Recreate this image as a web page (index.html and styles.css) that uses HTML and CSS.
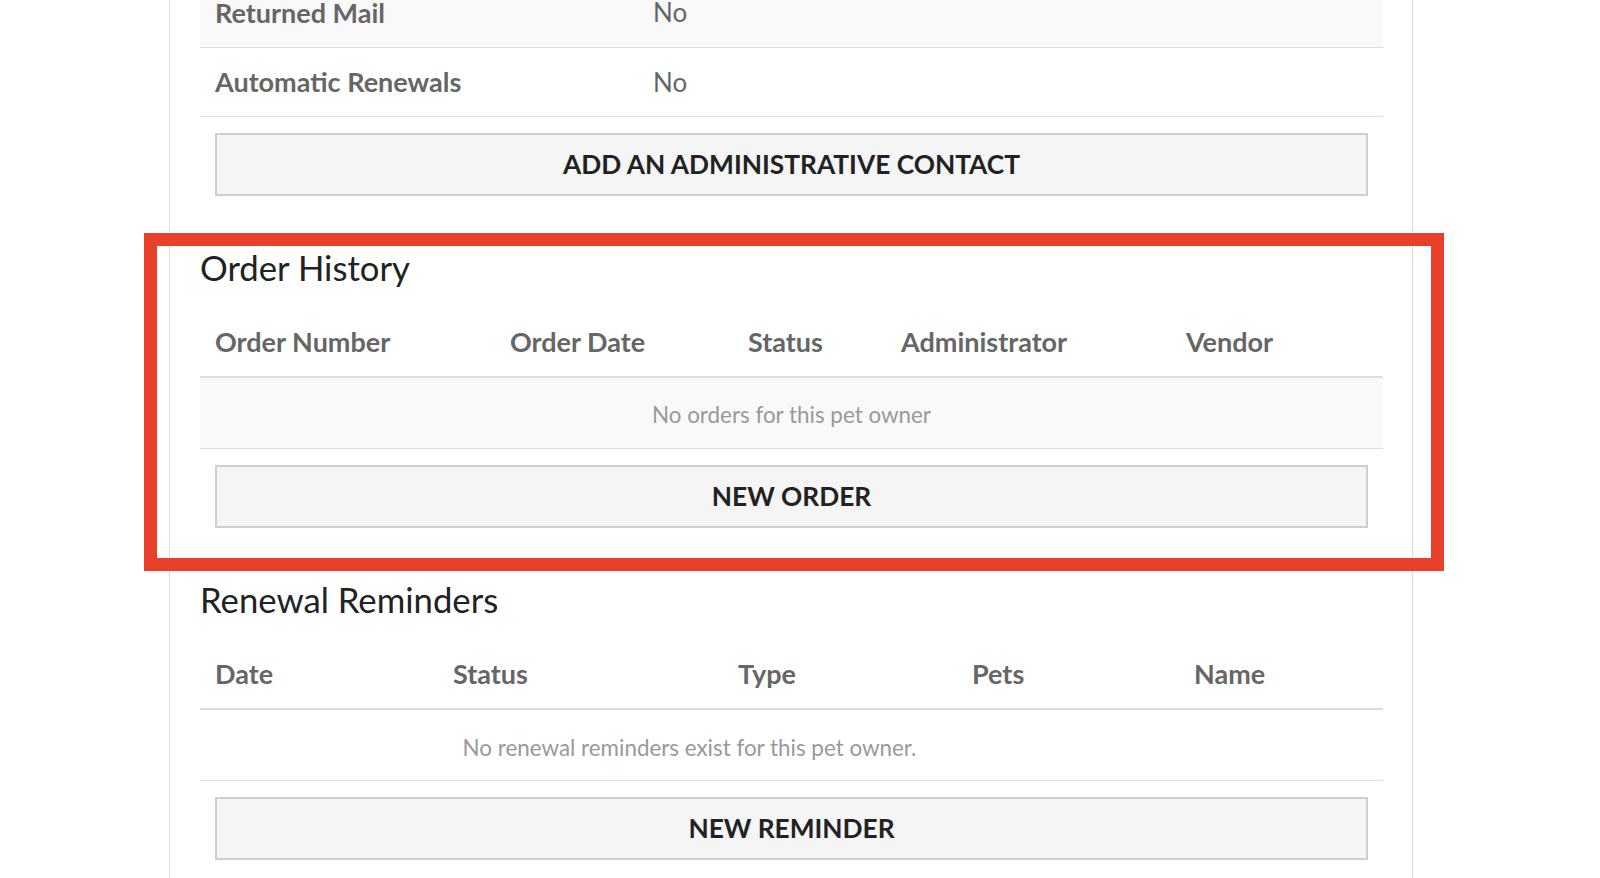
FILE: index.html
```html
<!DOCTYPE html>
<html lang="en">
<head>
    <meta charset="UTF-8">
    <title>Pet Owner</title>
    <link rel="stylesheet" href="styles.css">
</head>
<body>
<div class="page">
    <div class="card">
        <table class="info">
            <tr class="odd">
                <td class="label">Returned Mail</td>
                <td class="value">No</td>
            </tr>
            <tr>
                <td class="label">Automatic Renewals</td>
                <td class="value">No</td>
            </tr>
        </table>
        <button class="btn">ADD AN ADMINISTRATIVE CONTACT</button>

        <div class="section">
            <h2>Order History</h2>
            <table class="list orders">
                <thead>
                <tr>
                    <th class="c1">Order Number</th>
                    <th class="c2">Order Date</th>
                    <th class="c3">Status</th>
                    <th class="c4">Administrator</th>
                    <th class="c5">Vendor</th>
                </tr>
                </thead>
                <tbody>
                <tr class="odd">
                    <td colspan="5" class="empty">No orders for this pet owner</td>
                </tr>
                </tbody>
            </table>
            <button class="btn">NEW ORDER</button>
        </div>

        <div class="section">
            <h2>Renewal Reminders</h2>
            <table class="list reminders">
                <thead>
                <tr>
                    <th class="c1">Date</th>
                    <th class="c2">Status</th>
                    <th class="c3">Type</th>
                    <th class="c4">Pets</th>
                    <th class="c5">Name</th>
                </tr>
                </thead>
                <tbody>
                <tr>
                    <td colspan="4" class="empty">No renewal reminders exist for this pet owner.</td>
                    <td></td>
                </tr>
                </tbody>
            </table>
            <button class="btn">NEW REMINDER</button>
        </div>
    </div>
    <!-- annotation box round the order history block -->
    <div class="highlight"></div>
</div>
</body>
</html>
```
FILE: styles.css
```css
* {
    margin: 0;
    padding: 0;
    box-sizing: border-box;
}

html, body {
    background: #fff;
    font-family: "Lato", "Open Sans", sans-serif;
    overflow: hidden;
}

.page {
    display: flow-root;
    position: relative;
    width: 1600px;
    height: 878px;
}

.card {
    width: 1244px;
    min-height: 920px;
    margin: -22px 0 0 169px;
    padding: 0 29px 40px 30px;
    border-left: 1px solid #ddd;
    border-right: 1px solid #ddd;
}

table {
    width: 100%;
    border-collapse: collapse;
    table-layout: fixed;
}

.info td {
    height: 69px;
    padding: 0 15px;
    font-size: 26px;
    color: #666;
    border-bottom: 1px solid #ddd;
    vertical-align: middle;
}

.info .label {
    width: 438px;
    font-size: 27px;
    font-weight: bold;
}

tr.odd td {
    background: #f9f9f9;
}

.btn {
    display: block;
    width: calc(100% - 30px);
    height: 63px;
    margin: 16px 15px 0 15px;
    background: #f5f5f5;
    border: 2px solid #cfcfcf;
    font-family: "Lato", "Open Sans", sans-serif;
    font-size: 26.3px;
    font-weight: bold;
    color: #222;
    text-align: center;
    cursor: pointer;
}

.section h2 {
    margin-top: 51px;
    margin-bottom: 19px;
    font-size: 34.7px;
    font-weight: normal;
    color: #222;
    line-height: 1.2;
}

.list th {
    height: 70px;
    padding: 0 15px;
    font-size: 27px;
    font-weight: bold;
    color: #666;
    text-align: left;
    border-bottom: 2px solid #ddd;
    vertical-align: middle;
}

.list td {
    height: 71px;
    padding: 0 15px;
    border-bottom: 1px solid #ddd;
    vertical-align: middle;
}

.list .empty {
    padding-top: 4px;
    font-size: 22.4px;
    color: #999;
    text-align: center;
}

.orders .c1 { width: 295px; }
.orders .c2 { width: 238px; }
.orders .c3 { width: 153px; }
.orders .c4 { width: 285px; }

.reminders .c1 { width: 238px; }
.reminders .c2 { width: 285px; }
.reminders .c3 { width: 234px; }
.reminders .c4 { width: 222px; }

.highlight {
    position: absolute;
    left: 144px;
    top: 233px;
    width: 1300px;
    height: 338px;
    border: 13px solid #e8402a;
}
```
